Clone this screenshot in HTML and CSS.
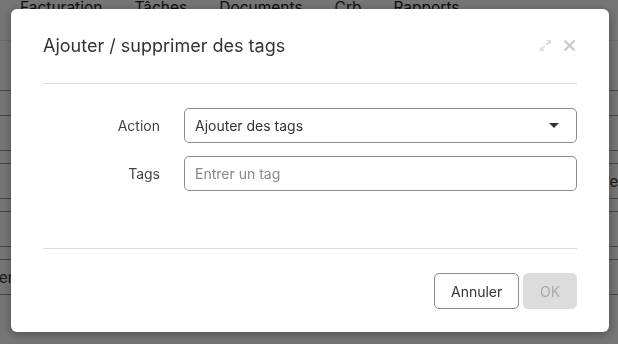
FILE: index.html
```html
<!DOCTYPE html>
<html lang="fr">
<head>
    <meta charset="UTF-8">
    <meta name="viewport" content="width=device-width, initial-scale=1.0">
    <title>Ajouter / supprimer des tags</title>
    <link rel="stylesheet" href="styles.css">
</head>
<body>
    <div class="page">
        <nav class="topnav">
            <span>Facturation</span>
            <span>Tâches</span>
            <span>Documents</span>
            <span>Crb</span>
            <span>Rapports</span>
        </nav>
        <div class="list">
            <div class="list-head"></div>
            <div class="row"></div>
            <div class="row"><span class="cell-right">re</span></div>
            <div class="row"></div>
            <div class="row"><span class="cell-left">en</span></div>
        </div>
    </div>

    <div class="backdrop"></div>

    <div class="dialog">
        <header class="dialog-header">
            <h2>Ajouter / supprimer des tags</h2>
            <div class="dialog-tools">
                <svg class="icon-expand" width="13" height="13" viewBox="0 0 13 13">
                    <path d="M7.5 1h4.5v4.5l-1.6-1.6-2.6 2.6-1.3-1.3 2.6-2.6z M5.5 12H1V7.5l1.6 1.6 2.6-2.6 1.3 1.3-2.6 2.6z" fill="#dcdcdc"/>
                </svg>
                <svg class="icon-close" width="11" height="11" viewBox="0 0 11 11">
                    <path d="M1.2 1.2l8.6 8.6M9.8 1.2l-8.6 8.6" stroke="#c8c8c8" stroke-width="2.2" stroke-linecap="round"/>
                </svg>
            </div>
        </header>

        <div class="dialog-body">
            <label for="action">Action</label>
            <div class="select">
                <span>Ajouter des tags</span>
                <svg width="10" height="5" viewBox="0 0 10 5"><path d="M0 0h10L5 5z" fill="#333"/></svg>
            </div>

            <label for="tags">Tags</label>
            <input type="text" id="tags" placeholder="Entrer un tag">
        </div>

        <footer class="dialog-footer">
            <button class="btn">Annuler</button>
            <button class="btn btn-primary" disabled>OK</button>
        </footer>
    </div>
</body>
</html>
```

FILE: styles.css
```css
body {
    margin: 0;
    padding: 0;
    font-family: Inter, "Noto Sans", sans-serif;
    background: #fff;
    color: #333;
    overflow: hidden;
}

.page {
    height: 344px;
}

.topnav {
    display: flex;
    gap: 32px;
    padding: 0 0 0 20px;
    height: 40px;
    border-bottom: 1px solid #e6e6e6;
    font-size: 15.5px;
    line-height: 20px;
    color: #222;
}

.topnav span {
    margin-top: -2px;
}

.list-head {
    height: 49px;
    border-bottom: 1px solid #999;
}

.row {
    height: 34px;
    margin-top: 12px;
    border-top: 1px solid #999;
    border-bottom: 1px solid #999;
    position: relative;
    font-size: 15px;
}

.list-head + .row {
    margin-top: 24px;
}

.cell-right {
    position: absolute;
    left: 604px;
    top: 8px;
}

.cell-left {
    position: absolute;
    left: -1px;
    top: 8px;
}

.backdrop {
    position: fixed;
    inset: 0;
    background: rgba(0, 0, 0, 0.54);
}

.dialog {
    position: fixed;
    left: 11px;
    top: 9px;
    width: 598px;
    height: 323px;
    background: #fff;
    border-radius: 6px;
    box-shadow: 0 2px 10px rgba(0, 0, 0, 0.35);
    display: flex;
    flex-direction: column;
}

.dialog-header {
    margin: 0 32px;
    height: 74px;
    flex-shrink: 0;
    border-bottom: 1px solid #dcdcdc;
    display: flex;
    align-items: center;
    justify-content: space-between;
}

.dialog-header h2 {
    margin: 0 0 2px 0;
    font-size: 18px;
    font-weight: 400;
    color: #333;
}

.dialog-tools {
    display: flex;
    align-items: center;
    gap: 12px;
    margin: 0 2px 2px 0;
}

.dialog-body {
    margin: 0 32px;
    padding: 24px 0 0 0;
    height: 165px;
    flex-shrink: 0;
    border-bottom: 1px solid #dcdcdc;
    display: grid;
    grid-template-columns: 117px 1fr;
    grid-template-rows: 35px 35px;
    align-content: start;
    column-gap: 24px;
    row-gap: 13px;
    box-sizing: border-box;
}

.dialog-body label {
    font-size: 14px;
    color: #444;
    text-align: right;
    line-height: 35px;
}

.select, .dialog-body input {
    border: 1px solid #8c8c8c;
    border-radius: 5px;
    box-sizing: border-box;
    height: 35px;
    font-family: inherit;
    font-size: 14px;
    padding: 0 17px 0 10px;
}

.select {
    display: flex;
    align-items: center;
    justify-content: space-between;
    color: #333;
}

.dialog-body input {
    width: 100%;
    outline: none;
}

.dialog-body input::placeholder {
    color: #888;
}

.dialog-footer {
    margin: 0 32px;
    padding-top: 24px;
    display: flex;
    justify-content: flex-end;
    gap: 4px;
}

.btn {
    height: 36px;
    padding: 0 16px;
    border: 1px solid #8c8c8c;
    border-radius: 5px;
    background: #fff;
    font-family: inherit;
    font-size: 14px;
    color: #333;
}

.btn:first-child {
    width: 85px;
}

.btn-primary {
    width: 54px;
    border-color: #dcdcdc;
    background: #dcdcdc;
    color: #aaa;
}
```
